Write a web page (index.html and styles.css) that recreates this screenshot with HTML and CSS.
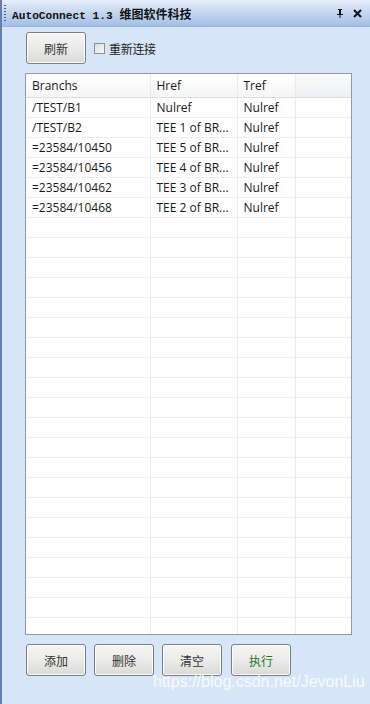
FILE: index.html
```html
<!DOCTYPE html>
<html lang="zh">

<head>
    <meta charset="UTF-8">
    <title>AutoConnect</title>
    <link rel="stylesheet" href="styles.css">
</head>

<body>

    <div class="window">

        <header class="titlebar">
            <span class="grip"></span>
            <h1>AutoConnect 1.3 <span class="cn">维图软件科技</span></h1>
            <span class="pin">
                <svg width="8" height="9" viewBox="0 0 8 9">
                    <path d="M2 0h4v1H5v4h2v1H4.5v3h-1V6H1V5h2V1H2z" fill="#111"/>
                </svg>
            </span>
            <span class="close">
                <svg width="9" height="9" viewBox="0 0 9 9">
                    <path d="M1 1l7 7M8 1L1 8" stroke="#111" stroke-width="2"/>
                </svg>
            </span>
        </header>

        <div class="toolbar">
            <button class="knap">刷新</button>
            <label class="check"><span class="box"></span>重新连接</label>
        </div>

        <div class="grid">
            <table>
                <colgroup>
                    <col style="width:124px">
                    <col style="width:87px">
                    <col style="width:58px">
                    <col>
                </colgroup>
                <thead>
                    <tr><th>Branchs</th><th>Href</th><th>Tref</th><th></th></tr>
                </thead>
                <tbody id="rows"></tbody>
            </table>
        </div>

        <div class="actions">
            <button class="knap">添加</button>
            <button class="knap">删除</button>
            <button class="knap">清空</button>
            <button class="knap run">执行</button>
        </div>

        <div class="watermark">https://blog.csdn.net/JevonLiu</div>
    </div>

    <script>
        const data = [
            ["/TEST/B1", "Nulref", "Nulref"],
            ["/TEST/B2", "TEE 1 of BR...", "Nulref"],
            ["=23584/10450", "TEE 5 of BR...", "Nulref"],
            ["=23584/10456", "TEE 4 of BR...", "Nulref"],
            ["=23584/10462", "TEE 3 of BR...", "Nulref"],
            ["=23584/10468", "TEE 2 of BR...", "Nulref"]
        ];

        const dest = document.querySelector("#rows");

        // fyld tabellen op med tomme rækker
        for (let i = 0; i < 28; i++) {
            const række = data[i] || ["", "", ""];
            const tr = document.createElement("tr");
            række.concat([""]).forEach(tekst => {
                const td = document.createElement("td");
                td.textContent = tekst;
                tr.appendChild(td);
            });
            dest.appendChild(tr);
        }
    </script>
</body>

</html>
```

FILE: styles.css
```css
body {
    margin: 0;
    background-color: #d6e5f7;
}

.window {
    position: relative;
    width: 370px;
    height: 704px;
    box-sizing: border-box;
    border-left: 2px solid #5f80b3;
    background-color: #d6e5f7;
    overflow: hidden;
}

.titlebar {
    display: flex;
    align-items: center;
    height: 27px;
    background: linear-gradient(#e6eefa, #c6d8f0 45%, #a3bfe6);
    border-bottom: 1px solid #9db6dc;
    box-sizing: border-box;
}

.grip {
    width: 2px;
    height: 16px;
    margin-left: 2px;
    background: repeating-linear-gradient(#3f5f92 0 1px, transparent 1px 3px);
}

.titlebar h1 {
    flex: 1;
    margin: 0 0 0 6px;
    font-family: "Liberation Mono", monospace;
    font-size: 11.2px;
    font-weight: bold;
    color: #111;
}

.titlebar .cn {
    font-family: "Noto Sans CJK SC", sans-serif;
    font-size: 12px;
}

.pin {
    display: flex;
    margin-right: 9px;
}

.close {
    display: flex;
    margin-right: 8px;
}

.toolbar {
    display: flex;
    align-items: center;
    padding: 5px 0 0 24px;
}

.knap {
    width: 60px;
    height: 32px;
    border: 1px solid #7b7f84;
    border-radius: 3px;
    background: linear-gradient(#f5f5f4, #ebebea 50%, #d9d9d6);
    box-shadow: inset 0 0 0 1px #fbfbfb;
    font-family: "Noto Sans CJK SC", sans-serif;
    font-size: 12px;
    color: #333;
    padding: 0;
}

.run {
    color: #1d7a1d;
}

.check {
    display: flex;
    align-items: center;
    margin-left: 8px;
    font-family: "Noto Sans CJK SC", sans-serif;
    font-size: 12px;
    color: #222;
    letter-spacing: -0.3px;
}

.box {
    width: 9px;
    height: 9px;
    margin-right: 4px;
    border: 1px solid #8e8f8f;
    background: linear-gradient(135deg, #dcdcdc, #fafafa);
}

.grid {
    height: 560px;
    margin: 9px 18px 0 23px;
    border: 1px solid #8d9aa8;
    background-color: #fff;
    overflow: hidden;
}

table {
    width: 100%;
    border-collapse: collapse;
    table-layout: fixed;
    font-family: "Open Sans", sans-serif;
    font-size: 12px;
    color: #1a1a1a;
}

th {
    height: 23px;
    padding: 0 0 0 6px;
    text-align: left;
    font-weight: normal;
    background: linear-gradient(#ffffff, #f4f5f6);
    border-bottom: 1px solid #dadde1;
    border-right: 1px solid #ebebeb;
}

th:last-child {
    background: linear-gradient(#fafafa, #eef0f2);
}

td {
    height: 19px;
    padding: 0 0 0 6px;
    white-space: nowrap;
    overflow: hidden;
    border-bottom: 1px solid #efefef;
    border-right: 1px solid #ebebeb;
}

td:last-child,
th:last-child {
    border-right: none;
}

.actions {
    display: flex;
    gap: 8px;
    padding: 9px 0 0 24px;
}

.actions .run {
    margin-left: 1px;
}

.watermark {
    position: absolute;
    left: 151px;
    top: 673px;
    font-family: "Liberation Sans", sans-serif;
    font-size: 16px;
    color: rgba(255, 255, 255, 0.85);
}
```
